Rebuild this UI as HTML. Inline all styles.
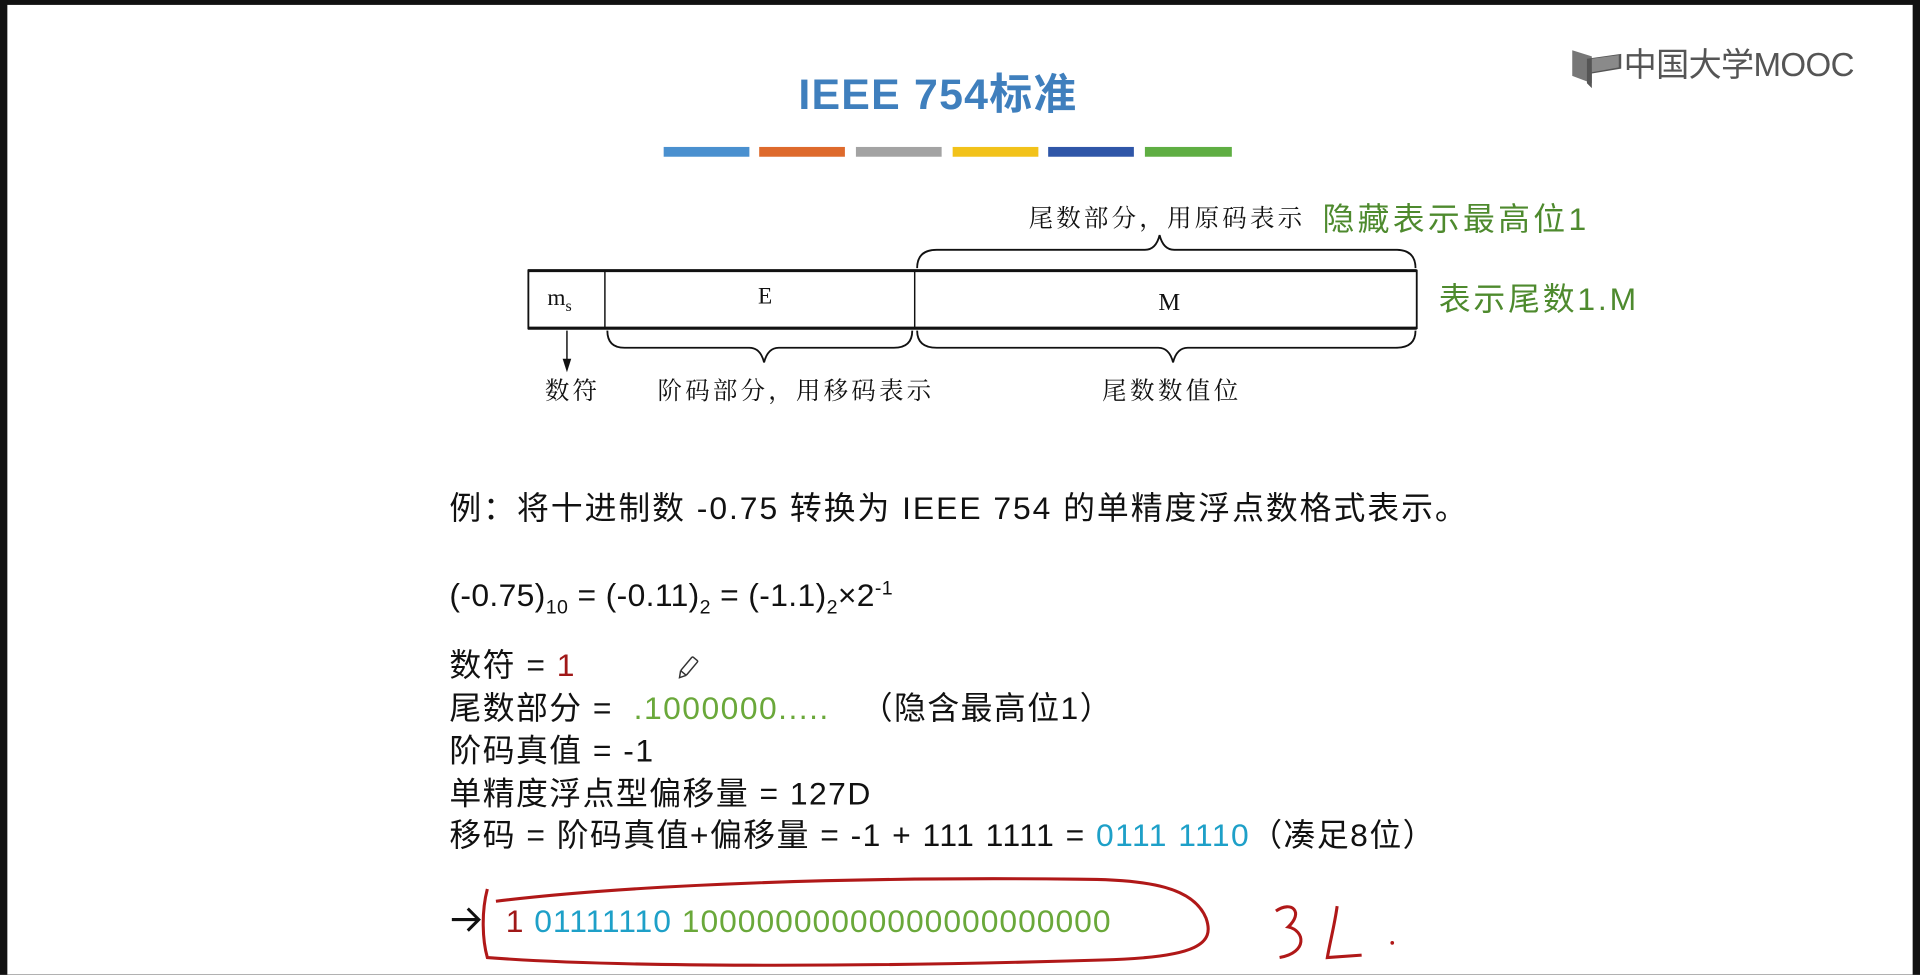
<!DOCTYPE html>
<html><head><meta charset="utf-8"><style>
html,body{margin:0;padding:0;background:#000;width:1920px;height:975px;overflow:hidden}
#w{position:absolute;left:0;top:0;width:1568px;height:796px;transform:scale(1.22449);transform-origin:0 0;background:#fff}
.t{position:absolute;white-space:nowrap;line-height:1}
.s{font-family:"Liberation Sans","Noto Sans CJK SC",sans-serif}
.f{font-family:"Liberation Serif","Noto Serif CJK SC",serif}
.g{color:#4e8a2e}
.bar{position:absolute;top:120px;height:8px;width:70px}
.ln{font-size:26px;color:#111;letter-spacing:1.2px}
</style></head><body><div id="w">
<div style="position:absolute;left:0;top:0;width:1568px;height:4px;background:#111"></div>
<div style="position:absolute;left:0;top:0;width:6px;height:796px;background:#111"></div>
<div style="position:absolute;left:1562px;top:0;width:6px;height:796px;background:#111"></div>

<div class="t s" style="left:652px;top:60px;font-size:35px;font-weight:bold;color:#3f7fbd;letter-spacing:1px">IEEE 754标准</div>
<div class="bar" style="left:542px;background:#4a90cf"></div>
<div class="bar" style="left:620px;background:#de6a2c"></div>
<div class="bar" style="left:699px;background:#a3a3a3"></div>
<div class="bar" style="left:778px;background:#f2c21a"></div>
<div class="bar" style="left:856px;background:#2f56a8"></div>
<div class="bar" style="left:935px;background:#5fae43;width:71px"></div>

<svg style="position:absolute;left:1282px;top:38px" width="46" height="34" viewBox="0 0 46 34">
<path d="M2 3 L18 8 L18 30 L2 24 Z" fill="#777"/>
<path d="M14 10 L42 6 L42 18 L18 22 L18 34 L14 30 Z" fill="#555"/>
<path d="M18 10 L40 7 L40 17 L18 21 Z" fill="#8a8a8a"/>
</svg>
<div class="t s" style="left:1326px;top:40px;font-size:27px;color:#555;letter-spacing:-0.5px">中国大学MOOC</div>

<div class="t f" style="left:840px;top:169px;font-size:20px;color:#111;letter-spacing:2.6px">尾数部分，用原码表示</div>
<div class="t s g" style="left:1080px;top:166px;font-size:26px;letter-spacing:2.7px">隐藏表示最高位1</div>
<div class="t s g" style="left:1175px;top:231px;font-size:26px;letter-spacing:2.3px">表示尾数1.M</div>

<svg style="position:absolute;left:0;top:0" width="1568" height="796">
<g fill="none" stroke="#111">
<rect x="431.5" y="221" width="725.5" height="47" stroke-width="1.5"/>
<line x1="431" y1="221" x2="1157" y2="221" stroke-width="2.5"/>
<line x1="431" y1="268" x2="1157" y2="268" stroke-width="2.5"/>
<line x1="494" y1="221" x2="494" y2="268" stroke-width="1.2"/>
<line x1="747" y1="221" x2="747" y2="268" stroke-width="1.2"/>
<path d="M749 219 Q749 204 765 204 L935 204 Q944 204 947 192 Q950 204 959 204 L1140 204 Q1156 204 1156 219" stroke-width="1.5"/>
<path d="M496 270 Q496 284 510 284 L612 284 Q621 284 624 296 Q627 284 636 284 L730 284 Q745 284 745 270" stroke-width="1.5"/>
<path d="M749 270 Q749 284 765 284 L946 284 Q955 284 958 296 Q961 284 970 284 L1140 284 Q1156 284 1156 270" stroke-width="1.5"/>
<line x1="463" y1="270" x2="463" y2="300" stroke-width="1.2"/>
</g>
<path d="M459.5 293 L463 304 L466.5 293 Z" fill="#111"/>
<path d="M398 726 C393 745 394 768 398 782 C500 790 700 790 900 784 C980 782 992 770 985 750 C975 725 940 718 880 718 C700 716 520 722 405 736" fill="none" stroke="#b01818" stroke-width="2.5"/>
<path d="M1042 744 C1055 735 1065 745 1052 757 C1066 760 1068 778 1045 782" fill="none" stroke="#b01818" stroke-width="2.5"/>
<path d="M1092 740 C1090 755 1086 770 1084 782 L1112 780" fill="none" stroke="#b01818" stroke-width="2.5"/>
<circle cx="1137" cy="770" r="1.5" fill="#b01818"/>
<g transform="translate(562,545) rotate(40)" fill="none" stroke="#333" stroke-width="1.2"><rect x="-3" y="-9" width="6" height="15" rx="1"/><path d="M-3 6 L0 11 L3 6"/></g>
<path d="M369 751 L390 751 M382 742 L391 751 L382 760" fill="none" stroke="#111" stroke-width="2.5"/>
</svg>
<div class="t f" style="left:447px;top:234px;font-size:19px;color:#111">m<sub style="font-size:13px">s</sub></div>
<div class="t f" style="left:619px;top:233px;font-size:19px;color:#111">E</div>
<div class="t f" style="left:946px;top:237px;font-size:20px;color:#111">M</div>
<div class="t f" style="left:445px;top:310px;font-size:20px;color:#111;letter-spacing:2.5px">数符</div>
<div class="t f" style="left:537px;top:310px;font-size:20px;color:#111;letter-spacing:2.6px">阶码部分，用移码表示</div>
<div class="t f" style="left:900px;top:310px;font-size:20px;color:#111;letter-spacing:2.8px">尾数数值位</div>

<div class="t s ln" style="left:367px;top:402px;letter-spacing:1.6px">例：将十进制数 -0.75 转换为 IEEE 754 的单精度浮点数格式表示。</div>
<div class="t s ln" style="left:367px;top:473px;letter-spacing:0.3px">(-0.75)<sub style="font-size:16px">10</sub> = (-0.11)<sub style="font-size:16px">2</sub> = (-1.1)<sub style="font-size:16px">2</sub>×2<sup style="font-size:16px">-1</sup></div>
<div class="t s ln" style="left:367px;top:530px">数符 = <span style="color:#a01818">1</span></div>
<div class="t s ln" style="left:367px;top:565px">尾数部分 = &nbsp;<span style="color:#6aa83a">.1000000.....</span> &nbsp;&nbsp;（隐含最高位1）</div>
<div class="t s ln" style="left:367px;top:600px">阶码真值 = -1</div>
<div class="t s ln" style="left:367px;top:635px">单精度浮点型偏移量 = 127D</div>
<div class="t s ln" style="left:367px;top:669px">移码 = 阶码真值+偏移量 = -1 + 111 1111 = <span style="color:#1ea0c8">0111 1110</span>（凑足8位）</div>
<div class="t s ln" style="left:413px;top:739px;letter-spacing:0.8px"><span style="color:#a01818">1</span> <span style="color:#1ea0c8">01111110</span> <span style="color:#6aa83a">10000000000000000000000</span></div>
</div></body></html>
